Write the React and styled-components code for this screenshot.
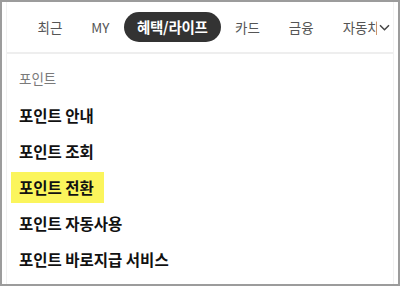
import React from "react";
import styled, { createGlobalStyle } from "styled-components";

const tabs = [
    { label: "최근" },
    { label: "MY" },
    { label: "혜택/라이프", active: true },
    { label: "카드" },
    { label: "금융" },
    { label: "자동차" },
];

const menu = [
    { label: "포인트 안내" },
    { label: "포인트 조회" },
    { label: "포인트 전환", marked: true },
    { label: "포인트 자동사용" },
    { label: "포인트 바로지급 서비스" },
];

export default function App() {
    return (
        <>
            <GlobalStyle />
            <Frame>
                <Panel>
                    <Nav>
                        <TabList>
                            {tabs.map((tab) => (
                                <Tab key={tab.label} $active={tab.active}>
                                    {tab.label}
                                </Tab>
                            ))}
                        </TabList>
                        <MoreButton aria-label="더보기">
                            <svg width="11" height="7" viewBox="0 0 11 7">
                                <path d="M1 1.2l4.5 4.5 4.5-4.5" fill="none" stroke="#444" strokeWidth="1.5" />
                            </svg>
                        </MoreButton>
                    </Nav>

                    <Content>
                        <GroupLabel>포인트</GroupLabel>
                        <MenuList>
                            {menu.map((item) => (
                                <MenuItem key={item.label}>
                                    <MenuText $marked={item.marked}>{item.label}</MenuText>
                                </MenuItem>
                            ))}
                        </MenuList>
                    </Content>
                </Panel>
            </Frame>
        </>
    );
}

const GlobalStyle = createGlobalStyle`
  html, body {
    margin: 0;
    padding: 0;
    background: #ffffff;
  }

  body {
    font-family: "Noto Sans CJK KR", "Noto Sans", sans-serif;
  }
`;

const Frame = styled.div`
  width: 400px;
  height: 286px;
  box-sizing: border-box;
  border: 2px solid #9c9c9c;
  background: #ffffff;
  overflow: hidden;
`;

const Panel = styled.div`
  height: 100%;
  margin: 0 4px;
  border-left: 1px solid #f1f1f1;
  border-right: 1px solid #f1f1f1;
`;

const Nav = styled.nav`
  display: flex;
  align-items: center;
  height: 50px;
  padding-left: 16px;
  border-bottom: 2px solid #eeeeee;
`;

const TabList = styled.div`
  display: flex;
  align-items: center;
  flex: 1;
  min-width: 0;
  overflow: hidden;
  white-space: nowrap;
`;

const Tab = styled.span`
  flex: none;
  height: 30px;
  padding: 0 ${(p) => (p.$active ? 13 : 14.5)}px;
  border-radius: 15px;
  background: ${(p) => (p.$active ? "#333333" : "transparent")};
  color: ${(p) => (p.$active ? "#ffffff" : "#555555")};
  font-size: ${(p) => (p.$active ? 14.5 : 13.5)}px;
  font-weight: ${(p) => (p.$active ? 700 : 400)};
  line-height: 30px;
  letter-spacing: ${(p) => (p.$active ? "-0.3px" : "0")};
`;

const MoreButton = styled.span`
  display: flex;
  align-items: center;
  justify-content: center;
  width: 14px;
  height: 30px;
  margin-right: 2px;
  background: #ffffff;
`;

const Content = styled.div`
  padding: 14px 0 0 12px;
`;

const GroupLabel = styled.div`
  height: 20px;
  margin-bottom: 9px;
  color: #7a7a7a;
  font-size: 13.5px;
  line-height: 20px;
`;

const MenuList = styled.ul`
  margin: 0;
  padding: 0;
  list-style: none;
`;

const MenuItem = styled.li`
  display: flex;
  align-items: center;
  height: 36px;
  margin-left: -8px;
`;

const MenuText = styled.span`
  display: inline-block;
  height: 31px;
  padding: ${(p) => (p.$marked ? "0 10px 0 8px" : "0 8px")};
  background: ${(p) => (p.$marked ? "#fbf55c" : "transparent")};
  color: #111111;
  font-size: 15.5px;
  font-weight: 700;
  line-height: 31px;
`;
